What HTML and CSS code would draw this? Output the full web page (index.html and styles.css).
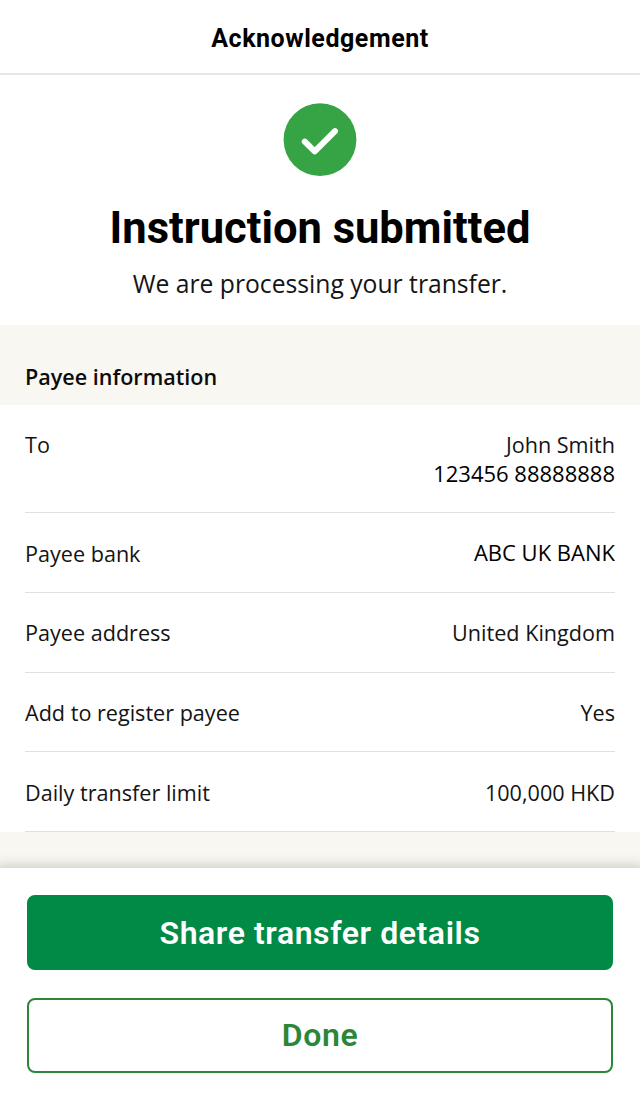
FILE: index.html
```html
<!DOCTYPE html>
<html lang="en">
<head>
<meta charset="utf-8">
<title>Acknowledgement</title>
<link rel="stylesheet" href="styles.css">
</head>
<body>
<div class="screen">
  <header class="topbar"><h1 class="topbar-title">Acknowledgement</h1></header>
  <main class="content">
    <section class="status">
      <svg class="status-icon" viewBox="-0.5 -0.5 74 74" aria-hidden="true">
        <circle cx="36.5" cy="36.2" r="36.4" fill="#36a445"/>
        <path d="M21.3 38.1 31.2 47.9 51.5 27.6" fill="none" stroke="#fff" stroke-width="6" stroke-linecap="round" stroke-linejoin="round"/>
      </svg>
      <h2 class="status-title">Instruction submitted</h2>
      <p class="status-text">We are processing your transfer.</p>
    </section>
    <h3 class="section-title">Payee information</h3>
    <dl class="details">
      <div class="row row-tall"><dt>To</dt><dd>John Smith<br><span class="strong-ink">123456 88888888</span></dd></div>
      <div class="row row-bank"><dt>Payee bank</dt><dd class="strong-ink">ABC UK BANK</dd></div>
      <div class="row"><dt>Payee address</dt><dd>United Kingdom</dd></div>
      <div class="row"><dt>Add to register payee</dt><dd>Yes</dd></div>
      <div class="row row-last"><dt>Daily transfer limit</dt><dd>100,000 HKD</dd></div>
    </dl>
  </main>
  <footer class="actions">
    <button class="btn btn-primary">Share transfer details</button>
    <button class="btn btn-outline">Done</button>
  </footer>
</div>
</body>
</html>
```
FILE: styles.css
```css
* { box-sizing: border-box; }
body, h1, h2, h3, p, dl, dd { margin: 0; }
body { background: #fff; color: #141414; font: 21.6px/30px "Open Sans", "Noto Sans", sans-serif; }
.screen { display: flex; flex-direction: column; width: 640px; height: 1100px; overflow: hidden; }
.topbar { flex: none; height: 75px; border-bottom: 2px solid #e6e6e6; text-align: center; }
.topbar-title { padding-top: 24px; color: #000; font: 700 25px/30px Roboto, sans-serif; letter-spacing: 0.55px; }
.content { flex: none; height: 793px; background: #f8f7f2; }
.status { display: flex; flex-direction: column; align-items: center; height: 250px; padding-top: 28px; background: #fff; }
.status-icon { flex: none; width: 74px; height: 74px; }
.status-title { margin-top: 27px; color: #000; font: 700 43.5px/50px Roboto, sans-serif; white-space: nowrap; }
.status-text { margin-top: 13px; font-size: 24.7px; line-height: 34px; white-space: nowrap; }
.section-title { height: 80px; padding: 37px 25px 0; color: #0c0c0c; font-size: 21.55px; font-weight: 600; line-height: 30px; }
.details { height: 427px; padding: 0 25px; background: #fff; }
.row { display: flex; justify-content: space-between; height: 79.6px; padding-top: 25px; border-bottom: 1.5px solid #e0e0e0; }
.row-tall { height: 108.4px; padding-top: 24.5px; }
.row-last { padding-top: 26px; }
.row dt, .row dd { line-height: 29.5px; }
.row-bank dt { padding-top: 1px; }
.row dd { text-align: right; }
.strong-ink { color: #000; font-size: 22px; }
.actions { flex: 1; display: flex; flex-direction: column; gap: 28px; padding: 27px; background: #fff; box-shadow: 0 4px 12px 6px rgba(60, 60, 45, 0.24); }
.btn { width: 586px; height: 75px; padding: 0 0 1px; border: 2px solid #2b8638; border-radius: 8px; font: 600 32px/40px Roboto, sans-serif; letter-spacing: 0.58px; }
.btn-primary { padding: 1px 0 0; border-color: #008a45; background: #008a45; color: #fff; }
.btn-outline { background: #fff; color: #2b8638; }
```
